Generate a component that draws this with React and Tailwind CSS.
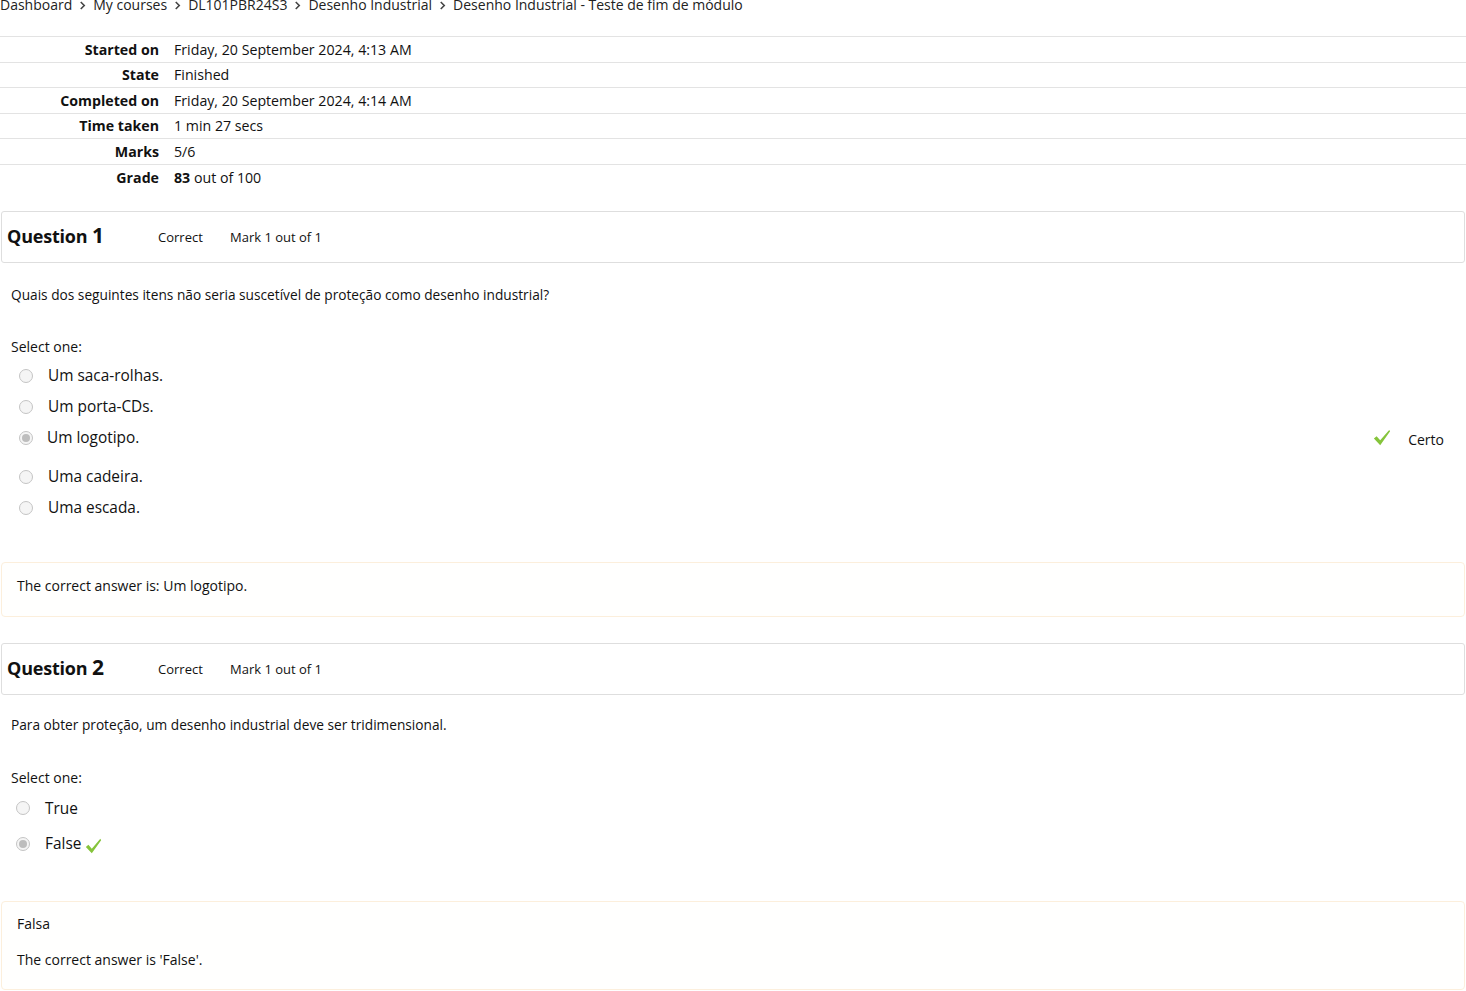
const font = { fontFamily: '"Open Sans", "Noto Sans", sans-serif' }

function Check({ className }) {
  return (
    <svg viewBox="0 0 20 20" className={className}>
      <path d="M1 10.5 L4 8 L8 12.5 L18 1 L19 2.5 L8 18 Z" fill="#85c43b" />
    </svg>
  )
}

function Radio({ checked }) {
  return (
    <span className="flex h-[14px] w-[14px] items-center justify-center rounded-full border border-[#c4c4c4] bg-[#f5f5f5]">
      {checked && <span className="h-[8px] w-[8px] rounded-full bg-[#bdbdbd]" />}
    </span>
  )
}

const summary = [
  ['Started on', 'Friday, 20 September 2024, 4:13 AM'],
  ['State', 'Finished'],
  ['Completed on', 'Friday, 20 September 2024, 4:14 AM'],
  ['Time taken', '1 min 27 secs'],
  ['Marks', '5/6'],
  ['Grade', <><b className="font-bold">83</b> out of 100</>],
]

function QuestionHeader({ n }) {
  return (
    <div className="mx-px flex h-[52px] items-center rounded-[3px] border border-[#dedede] bg-white px-[5px]">
      <div className="w-[151px] pb-[2px] text-[18px] font-bold tracking-[-0.2px]">
        Question <span className="text-[21px]">{n}</span>
      </div>
      <span className="w-[72px] pt-[2px] text-[13px]">Correct</span>
      <span className="pt-[2px] text-[13px]">Mark 1 out of 1</span>
    </div>
  )
}

export default function App() {
  const options = ['Um saca-rolhas.', 'Um porta-CDs.', 'Um logotipo.', 'Uma cadeira.', 'Uma escada.']
  return (
    <div className="min-h-[991px] bg-white text-[#111]" style={font}>
      <div className="mt-[-5px] flex items-center gap-[7px] text-[14px] leading-[20px] text-[#222]">
        {['Dashboard', 'My courses', 'DL101PBR24S3', 'Desenho Industrial', 'Desenho Industrial - Teste de fim de módulo'].map((c, i) => (
          <span key={i} className="flex items-center gap-[7px]">
            {i > 0 && (
              <svg viewBox="0 0 8 10" className="h-[9px] w-[7px]">
                <path d="M2 1 L6 5 L2 9" fill="none" stroke="#444" strokeWidth="1.8" />
              </svg>
            )}
            {c}
          </span>
        ))}
      </div>

      <div className="mt-[21px]">
        {summary.map(([k, v]) => (
          <div key={k} className="flex h-[25.6px] items-center border-t border-[#e3e3e3] text-[14.2px]">
            <div className="w-[159px] text-right font-bold">{k}</div>
            <div className="pl-[15px]">{v}</div>
          </div>
        ))}
      </div>

      <div className="mt-[21px]">
        <QuestionHeader n="1" />
        <div className="px-[11px] pt-[22px] text-[13.7px]">
          <p>Quais dos seguintes itens não seria suscetível de proteção como desenho industrial?</p>
          <p className="mt-[31px] text-[14px]">Select one:</p>
          <div className="mt-[3px] text-[15.4px]">
            {options.map((o, i) => (
              <div key={o} className={`flex items-center ${i === 2 ? 'h-[39px] pb-[8px]' : 'h-[31px]'}`}>
                <span className="ml-[8px] mr-[15px]"><Radio checked={i === 2} /></span>
                <span className={i === 2 ? '-ml-px flex-1' : 'flex-1'}>{o}</span>
                {i === 2 && (
                  <span className="flex items-center pr-[11px]">
                    <Check className="mr-[17px] h-[18px] w-[18px]" />
                    <span className="pt-[4px] text-[14px]">Certo</span>
                  </span>
                )}
              </div>
            ))}
          </div>
        </div>
        <div className="mx-px mt-[39px] h-[55px] rounded-[4px] border border-[#fcefdc] bg-[#fffffe] px-[15px] pt-[12px] text-[14px]">
          The correct answer is: Um logotipo.
        </div>
      </div>

      <div className="mt-[26px]">
        <QuestionHeader n="2" />
        <div className="px-[11px] pt-[20px] text-[13.7px]">
          <p>Para obter proteção, um desenho industrial deve ser tridimensional.</p>
          <p className="mt-[31px] text-[14px]">Select one:</p>
          <div className="mt-[4px] text-[15.4px]">
            <div className="flex h-[33px] items-center">
              <span className="ml-[5px] mr-[15px]"><Radio /></span>
              <span>True</span>
            </div>
            <div className="flex h-[38px] items-center">
              <span className="ml-[5px] mr-[15px]"><Radio checked /></span>
              <span>False</span>
              <Check className="ml-[4px] mt-[6px] h-[17px] w-[17px]" />
            </div>
          </div>
        </div>
        <div className="mx-px mt-[38px] h-[89px] rounded-[4px] border border-[#fcefdc] bg-[#fffffe] px-[15px] pt-[11px] text-[14px]">
          <p>Falsa</p>
          <p className="mt-[15px]">The correct answer is 'False'.</p>
        </div>
      </div>
    </div>
  )
}
